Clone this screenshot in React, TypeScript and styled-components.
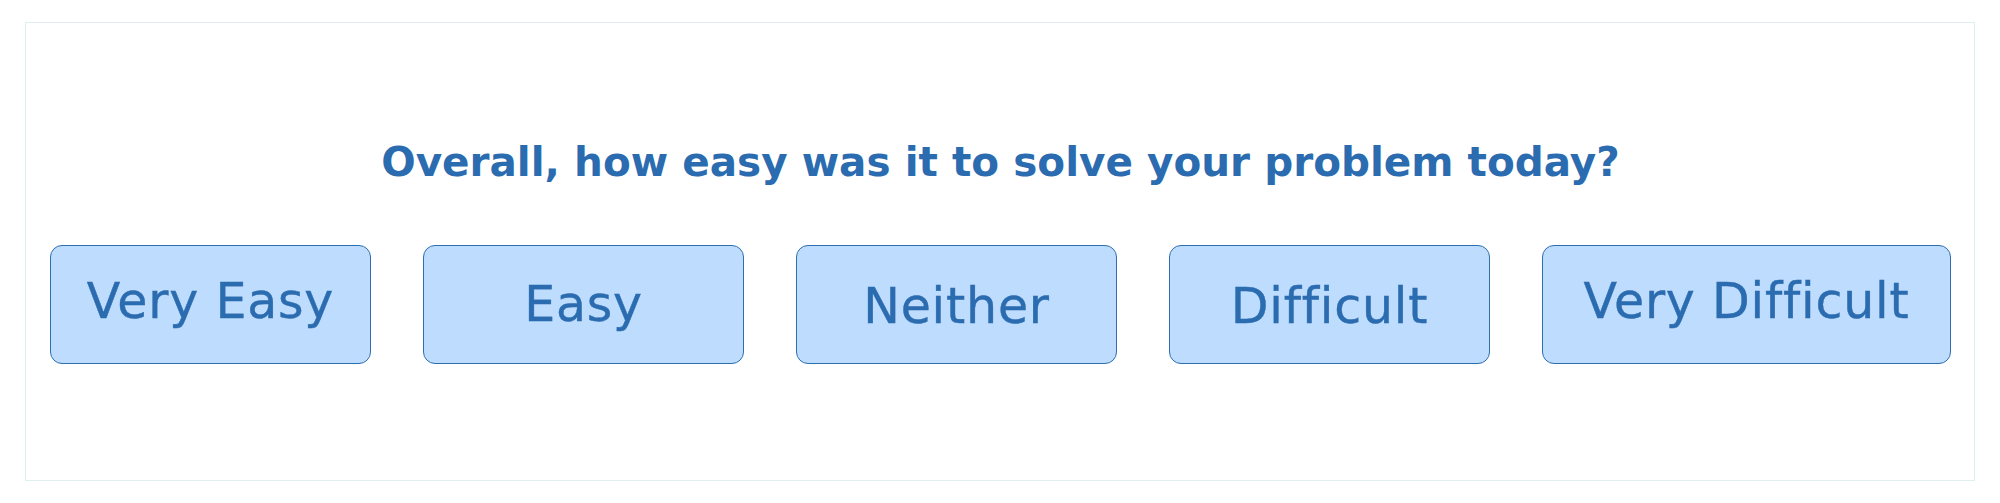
import styled, { createGlobalStyle } from "styled-components";

const GlobalStyle = createGlobalStyle`
  html, body {
    margin: 0;
    padding: 0;
    background: #ffffff;
  }
  body {
    font-family: "DejaVu Sans", "Noto Sans", sans-serif;
  }
`;

const Page = styled.div`
  padding: 22px 25px;
`;

const Card = styled.section`
  box-sizing: border-box;
  height: 459px;
  border: 1px solid #e1eef0;
  background: #ffffff;
  padding: 119px 23px 0 24px;
  display: flex;
  flex-direction: column;
  gap: 63px;
`;

const Question = styled.h2`
  margin: 0;
  text-align: center;
  font-size: 40.5px;
  line-height: 40px;
  font-weight: bold;
  color: #2b6cb0;
`;

const Options = styled.div`
  display: flex;
  justify-content: space-between;
`;

const Option = styled.button<{ $offset: number; $wide?: boolean }>`
  box-sizing: border-box;
  width: ${(p) => (p.$wide ? 409 : 321)}px;
  height: 119px;
  padding: 0;
  border: 1.5px solid #2e6fb0;
  border-radius: 12px;
  background: #bedcfd;
  color: #2b6cb0;
  font-family: "DejaVu Sans", "Noto Sans", sans-serif;
  font-size: 49px;
  line-height: 49px;
  letter-spacing: 0.8px;
  font-variant-ligatures: none;
  -webkit-text-stroke: 0.4px #2b6cb0;
  display: flex;
  align-items: center;
  justify-content: center;
  white-space: nowrap;
  cursor: pointer;

  & span {
    display: block;
    transform: translateY(${(p) => p.$offset}px);
  }
`;

const choices = [
  { label: "Very Easy", offset: -3 },
  { label: "Easy", offset: 0 },
  { label: "Neither", offset: 2 },
  { label: "Difficult", offset: 2 },
  { label: "Very Difficult", offset: -3, wide: true },
];

export default function App() {
  return (
    <>
      <GlobalStyle />
      <Page>
        <Card>
          <Question>Overall, how easy was it to solve your problem today?</Question>
          <Options>
            {choices.map((c) => (
              <Option key={c.label} $offset={c.offset} $wide={c.wide}>
                <span>{c.label}</span>
              </Option>
            ))}
          </Options>
        </Card>
      </Page>
    </>
  );
}
